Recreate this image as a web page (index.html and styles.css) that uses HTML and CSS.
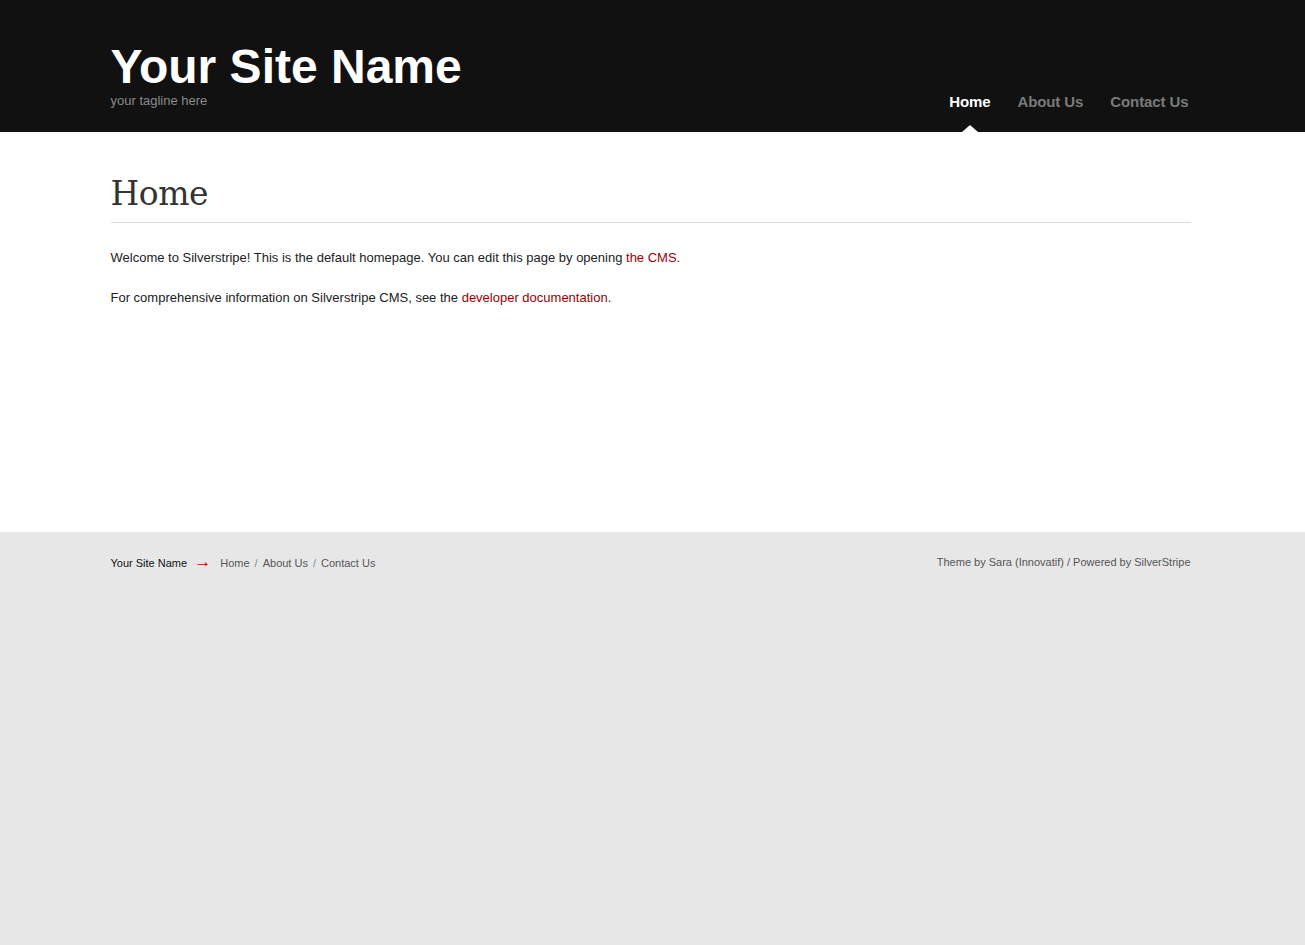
FILE: index.html
```html
<!DOCTYPE html>
<html>
<head>
<meta charset="utf-8">
<title>Home</title>
<link rel="stylesheet" href="styles.css">
</head>
<body>
<header class="header">
  <div class="container header-inner">
    <div class="brand">
      <h1 class="brand-name">Your Site Name</h1>
      <p class="tagline">your tagline here</p>
    </div>
    <nav class="nav">
      <a class="nav-link current" href="#">Home</a>
      <a class="nav-link" href="#">About Us</a>
      <a class="nav-link" href="#">Contact Us</a>
    </nav>
  </div>
</header>
<main class="main">
  <div class="container">
    <h2 class="page-title">Home</h2>
    <p class="para">Welcome to Silverstripe! This is the default homepage. You can edit this page by opening <a href="#">the CMS</a>.</p>
    <p class="para">For comprehensive information on Silverstripe CMS, see the <a href="#">developer documentation</a>.</p>
  </div>
</main>
<footer class="footer">
  <div class="container footer-inner">
    <div class="crumbs">
      <span class="crumb-site">Your Site Name</span>
      <span class="arrow">&rarr;</span>
      <a href="#">Home</a><span class="sep">/</span><a href="#">About Us</a><span class="sep">/</span><a href="#">Contact Us</a>
    </div>
    <div class="credits">
      <a href="#">Theme by Sara (Innovatif)</a> / <a href="#">Powered by SilverStripe</a>
    </div>
  </div>
</footer>
</body>
</html>
```

FILE: styles.css
```css
html, body {
  margin: 0;
  padding: 0;
  height: 100%;
}
body {
  font-family: "Liberation Sans", Arial, sans-serif;
  background: #e7e7e8;
  color: #222;
  display: flex;
  flex-direction: column;
}
.container {
  width: 1080px;
  margin: 0 auto;
  position: relative;
  left: -2px;
}
.header {
  background: #111;
  height: 132px;
}
.header-inner {
  display: flex;
  justify-content: space-between;
  align-items: flex-start;
  height: 132px;
}
.brand {
  padding-top: 39px;
}
.brand-name {
  margin: 0;
  font-size: 48px;
  font-weight: bold;
  color: #fff;
  line-height: 56px;
  letter-spacing: 0;
}
.tagline {
  margin: -2px 0 0 0;
  font-size: 13px;
  color: #8a8a8a;
  line-height: 16px;
}
.nav {
  display: flex;
  gap: 27px;
  padding-top: 93px;
  margin-right: 2px;
}
.nav-link {
  font-size: 15px;
  font-weight: bold;
  color: #7a7a7a;
  text-decoration: none;
  line-height: 18px;
  position: relative;
  letter-spacing: -0.1px;
}
.nav-link.current {
  color: #fff;
}
.nav-link.current::after {
  content: "";
  position: absolute;
  left: 50%;
  bottom: -21px;
  margin-left: -8px;
  border-left: 8px solid transparent;
  border-right: 8px solid transparent;
  border-bottom: 7px solid #fff;
}
.main {
  background: #fff;
  height: 400px;
}
.page-title {
  margin: 43px 0 0 0;
  font-family: "DejaVu Serif", Georgia, serif;
  font-weight: normal;
  font-size: 33px;
  color: #333;
  line-height: 38px;
  padding-bottom: 9px;
  border-bottom: 1px solid #dcdcdc;
  letter-spacing: -0.5px;
}
.para {
  margin: 27px 0 0 0;
  font-size: 13px;
  line-height: 16px;
  color: #222;
}
.para + .para {
  margin-top: 24px;
}
.para a {
  color: #9b0000;
  text-decoration: none;
}
.footer {
  flex: 1;
  background: #e7e7e8;
}
.footer-inner {
  display: flex;
  justify-content: space-between;
  padding-top: 23px;
  font-size: 11px;
  line-height: 14px;
}
.crumb-site {
  color: #111;
}
.arrow {
  color: #b00;
  font-size: 17px;
  line-height: 14px;
  margin: 0 6px 0 4px;
}
.crumbs a {
  color: #555;
  text-decoration: none;
}
.sep {
  color: #888;
  margin: 0 5px;
}
.credits {
  color: #555;
}
.credits a {
  color: #555;
  text-decoration: none;
}
```
